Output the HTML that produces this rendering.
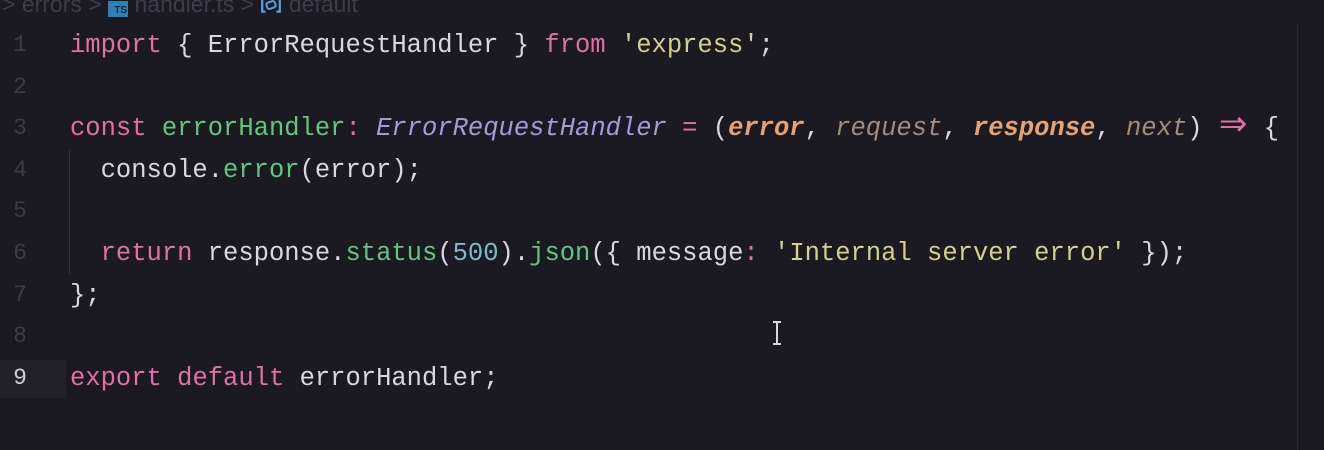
<!DOCTYPE html>
<html><head><meta charset="utf-8"><style>
html,body{margin:0;padding:0;}
body{width:1324px;height:450px;background:#1b1922;overflow:hidden;position:relative;font-family:"Liberation Mono",monospace;}
.bc{position:absolute;left:2px;top:-9px;font-family:"Liberation Sans",sans-serif;font-size:23px;color:#3e3b4d;white-space:pre;}
.ts{display:inline-block;width:20px;height:16px;background:#2f7fb8;color:#0e2638;font-size:10px;font-weight:bold;text-align:right;line-height:20px;vertical-align:-1px;padding-right:1px;box-sizing:border-box;}
.ln{position:absolute;left:0;width:40px;text-align:center;font-size:23px;color:#3d3a4b;}
.cl{position:absolute;left:70px;font-size:25.5px;color:#d9d7e0;white-space:pre;}
.k{color:#e16fa8}.f{color:#62c77a}.t{color:#a69ad8;font-style:italic}.p{color:#e6a272;font-style:italic;font-weight:bold}.pd{color:#a58b78;font-style:italic}.s{color:#d5d08a}.n{color:#7cb9cf}.o{color:#e16fa8}
.arr{display:inline-block;width:30.6px;text-align:center;color:#e16fa8;font-size:34px;line-height:20px;font-family:"DejaVu Sans",sans-serif;}
</style></head><body>
<div class="bc">&gt; errors &gt; <span class="ts">TS</span> handler.ts &gt; <svg width="22" height="18" viewBox="0 0 20 16" style="vertical-align:-2px"><path d="M5 2H2V14H5M15 2H18V14H15" stroke="#5a9fe0" stroke-width="2" fill="none"/><rect x="6" y="5" width="8" height="6" rx="2" transform="rotate(-20 10 8)" stroke="#5a9fe0" stroke-width="1.8" fill="none"/></svg> default</div>
<div style="position:absolute;left:0;top:360px;width:66px;height:38px;background:#22202b"></div>
<div style="position:absolute;left:69px;top:150px;width:1px;height:124px;background:#34313f"></div>
<div style="position:absolute;left:1297px;top:22px;width:1px;height:428px;background:#292634"></div>
<div class="ln" style="top:32px">1</div>
<div class="ln" style="top:74px">2</div>
<div class="ln" style="top:115px">3</div>
<div class="ln" style="top:157px">4</div>
<div class="ln" style="top:198px">5</div>
<div class="ln" style="top:240px">6</div>
<div class="ln" style="top:282px">7</div>
<div class="ln" style="top:323px">8</div>
<div class="ln" style="top:365px;color:#d0cfd8">9</div>
<div class="cl" style="top:31px"><span class="k">import</span> { ErrorRequestHandler } <span class="k">from</span> <span class="s">'express'</span>;</div>
<div class="cl" style="top:114px"><span class="k">const</span> <span class="f">errorHandler</span><span class="o">:</span> <span class="t">ErrorRequestHandler</span> <span class="o">=</span> (<span class="p">error</span>, <span class="pd">request</span>, <span class="p">response</span>, <span class="pd">next</span>) <span class="arr">⇒</span> {</div>
<div class="cl" style="top:156px">  console.<span class="f">error</span>(error);</div>
<div class="cl" style="top:239px">  <span class="k">return</span> response.<span class="f">status</span>(<span class="n">500</span>).<span class="f">json</span>({ message<span class="o">:</span> <span class="s">'Internal server error'</span> });</div>
<div class="cl" style="top:281px">};</div>
<div class="cl" style="top:364px"><span class="k">export</span> <span class="k">default</span> errorHandler;</div>
<svg style="position:absolute;left:771px;top:321px" width="12" height="24" viewBox="0 0 12 24"><path d="M2 1H10M2 23H10M6 1V23" stroke="#d8d6de" stroke-width="2" fill="none"/></svg>
</body></html>
